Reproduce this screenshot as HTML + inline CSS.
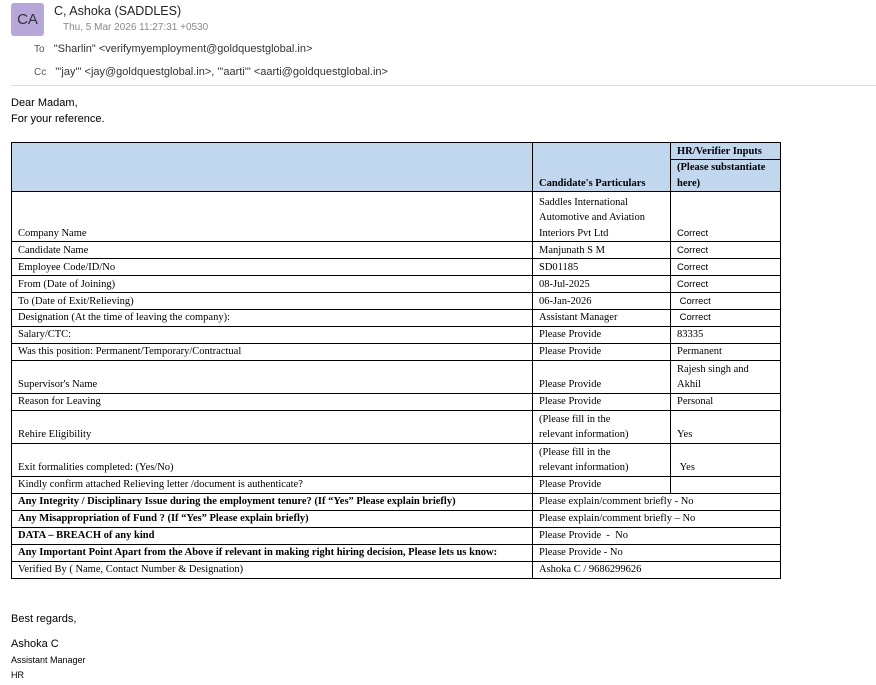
<!DOCTYPE html>
<html><head><meta charset="utf-8"><style>
body{margin:0;width:876px;height:685px;background:#fff;font-family:"Liberation Sans",sans-serif;color:#000;position:relative;overflow:hidden}
.a{position:absolute}
.av{left:11px;top:3px;width:33px;height:33px;background:#b6a6d9;border-radius:3px;font-size:15px;color:#333;text-align:center;line-height:33px}
.hd{font-size:11px;color:#333}
.g{color:#555}
table{position:absolute;left:11px;top:142px;border-collapse:collapse;font-family:"Liberation Serif",serif;font-size:10.5px;table-layout:fixed}
td{border:1px solid #000;padding:0 0 0 6px;vertical-align:bottom;line-height:15.5px;white-space:nowrap;overflow:hidden}
.s{font-family:"Liberation Sans",sans-serif;font-size:9.5px}
.b{font-weight:bold}
.h{background:#c1d7ee;font-weight:bold}
.sig{font-size:11.5px}
</style></head><body>
<div class="a av">CA</div>
<div class="a hd" style="left:54px;top:4px;font-size:12.5px;color:#222">C, Ashoka (SADDLES)</div>
<div class="a hd" style="left:63px;top:22px;font-size:10px;color:#888">Thu, 5 Mar 2026 11:27:31 +0530</div>
<div class="a hd" style="left:34px;top:43px"><span class="g" style="font-size:10px">To</span>&nbsp;&nbsp;&nbsp;"Sharlin" &lt;verifymyemployment@goldquestglobal.in&gt;</div>
<div class="a hd" style="left:34px;top:66px"><span class="g" style="font-size:10px">Cc</span>&nbsp;&nbsp;&nbsp;"'jay'" &lt;jay@goldquestglobal.in&gt;, "'aarti'" &lt;aarti@goldquestglobal.in&gt;</div>
<div class="a" style="left:11px;top:85px;width:865px;border-top:1px solid #ddd"></div>
<div class="a" style="left:11px;top:95px;font-size:11px;line-height:16px">Dear Madam,<br>For your reference.</div>
<table>
<colgroup><col style="width:521px"><col style="width:138px"><col style="width:110px"></colgroup>
<tr style="height:17px"><td class="h" rowspan="2"></td><td class="h" rowspan="2">Candidate's Particulars</td><td class="h">HR/Verifier Inputs</td></tr>
<tr style="height:32px"><td class="h">(Please substantiate<br>here)</td></tr>
<tr style="height:50px"><td>Company Name</td><td>Saddles International<br>Automotive and Aviation<br>Interiors Pvt Ltd</td><td class="s">Correct</td></tr>
<tr style="height:17px"><td>Candidate Name</td><td>Manjunath S M</td><td class="s">Correct</td></tr>
<tr style="height:17px"><td>Employee Code/ID/No</td><td>SD01185</td><td class="s">Correct</td></tr>
<tr style="height:17px"><td>From (Date of Joining)</td><td>08-Jul-2025</td><td class="s">Correct</td></tr>
<tr style="height:17px"><td>To (Date of Exit/Relieving)</td><td>06-Jan-2026</td><td class="s">&nbsp;Correct</td></tr>
<tr style="height:16px"><td>Designation (At the time of leaving the company):</td><td>Assistant Manager</td><td class="s">&nbsp;Correct</td></tr>
<tr style="height:17px"><td>Salary/CTC:</td><td>Please Provide</td><td>83335</td></tr>
<tr style="height:17px"><td>Was this position: Permanent/Temporary/Contractual</td><td>Please Provide</td><td>Permanent</td></tr>
<tr style="height:33px"><td>Supervisor's Name</td><td>Please Provide</td><td>Rajesh singh and<br>Akhil</td></tr>
<tr style="height:17px"><td>Reason for Leaving</td><td>Please Provide</td><td>Personal</td></tr>
<tr style="height:33px"><td>Rehire Eligibility</td><td>(Please fill in the<br>relevant information)</td><td>Yes</td></tr>
<tr style="height:33px"><td>Exit formalities completed: (Yes/No)</td><td>(Please fill in the<br>relevant information)</td><td>&nbsp;Yes</td></tr>
<tr style="height:17px"><td>Kindly confirm attached Relieving letter /document is authenticate?</td><td>Please Provide</td><td></td></tr>
<tr style="height:17px"><td class="b">Any Integrity / Disciplinary Issue during the employment tenure? (If “Yes” Please explain briefly)</td><td colspan="2">Please explain/comment briefly - No</td></tr>
<tr style="height:17px"><td class="b">Any Misappropriation of Fund ? (If “Yes” Please explain briefly)</td><td colspan="2">Please explain/comment briefly – No</td></tr>
<tr style="height:17px"><td class="b">DATA – BREACH of any kind</td><td colspan="2">Please Provide &nbsp;- &nbsp;No</td></tr>
<tr style="height:17px"><td class="b">Any Important Point Apart from the Above if relevant in making right hiring decision, Please lets us know:</td><td colspan="2">Please Provide - No</td></tr>
<tr style="height:17px"><td>Verified By ( Name, Contact Number &amp; Designation)</td><td colspan="2">Ashoka C / 9686299626</td></tr>
</table>
<div class="a sig" style="left:11px;top:613px;font-size:11px">Best regards,</div>
<div class="a sig" style="left:11px;top:638px;font-size:11px">Ashoka C</div>
<div class="a" style="left:11px;top:655px;font-size:9px">Assistant Manager</div>
<div class="a" style="left:11px;top:670px;font-size:9px">HR</div>
</body></html>
